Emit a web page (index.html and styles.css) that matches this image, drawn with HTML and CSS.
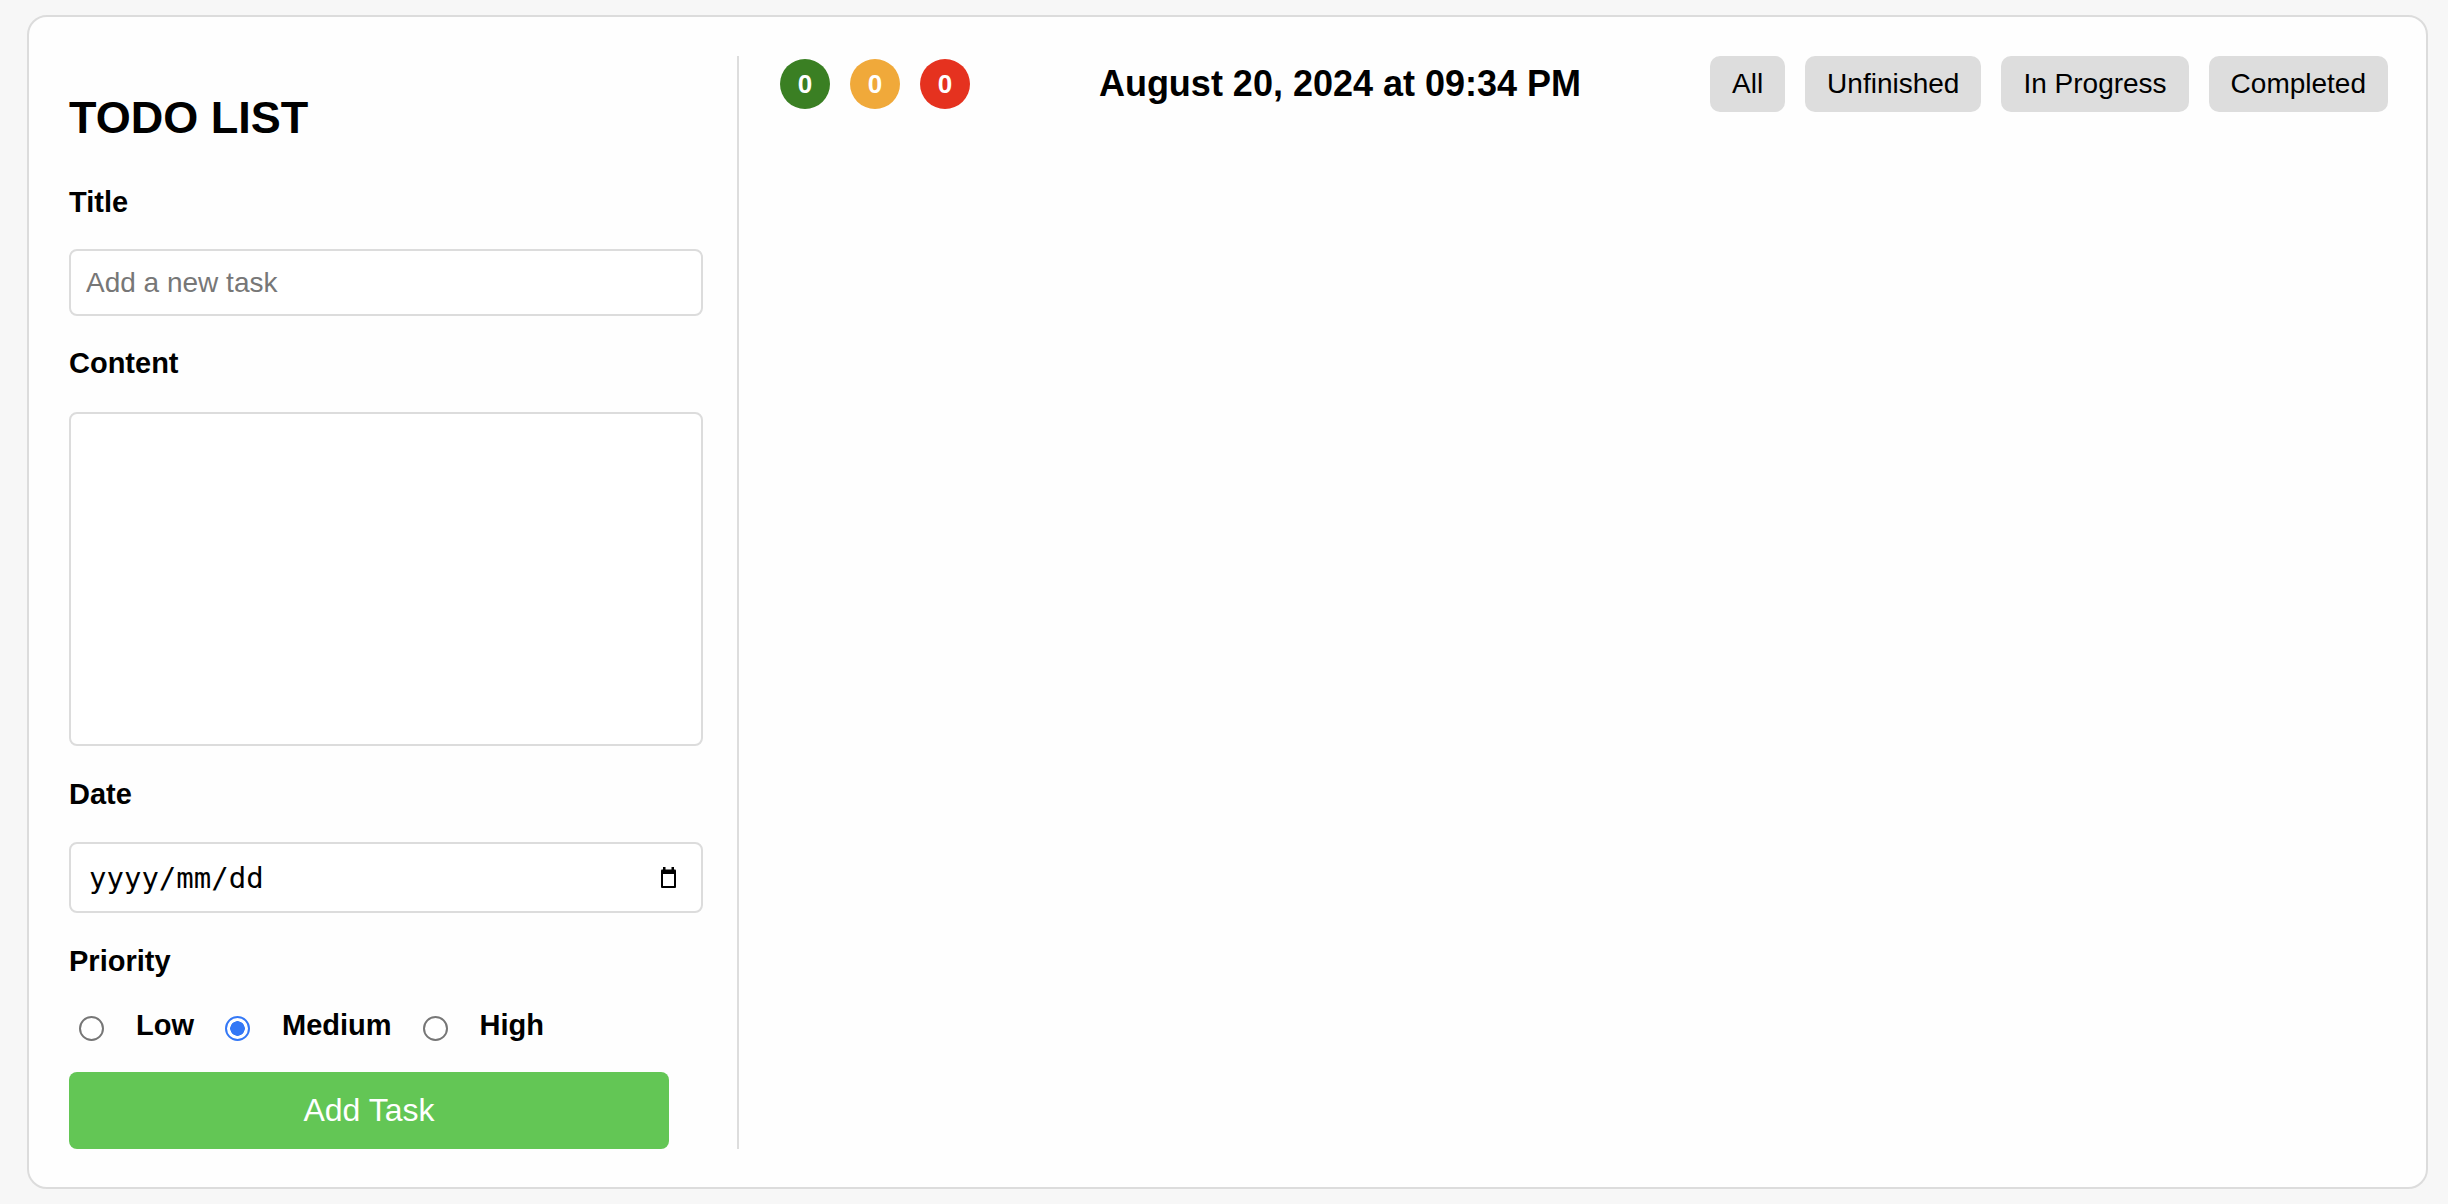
FILE: index.html
```html
<!DOCTYPE html>
<html lang="en">
<head>
<meta charset="utf-8">
<title>Todo List</title>
<link rel="stylesheet" href="styles.css">
</head>
<body>
<div class="card">
  <section class="form-panel">
    <h2 class="app-title">TODO LIST</h2>
    <label class="field-label" for="title">Title</label>
    <input class="text-input" id="title" type="text" placeholder="Add a new task">
    <label class="field-label label-content" for="content">Content</label>
    <textarea class="text-area" id="content"></textarea>
    <label class="field-label label-date">Date</label>
    <div class="date-input">
      <span class="date-text">yyyy/mm/dd</span>
      <svg class="cal-icon" width="15" height="21" viewBox="0 0 15 21" aria-hidden="true">
        <rect x="2" y="0" width="2.5" height="4" fill="#000"/>
        <rect x="10.5" y="0" width="2.5" height="4" fill="#000"/>
        <rect x="0" y="2.5" width="15" height="18.5" rx="1" fill="#000"/>
        <rect x="2" y="7" width="11" height="12" fill="#fff"/>
      </svg>
    </div>
    <label class="field-label label-priority">Priority</label>
    <div class="radio-row">
      <input class="radio" type="radio" name="priority" id="p-low">
      <label class="radio-label" for="p-low">Low</label>
      <input class="radio" type="radio" name="priority" id="p-med" checked>
      <label class="radio-label" for="p-med">Medium</label>
      <input class="radio" type="radio" name="priority" id="p-high">
      <label class="radio-label" for="p-high">High</label>
    </div>
    <button class="add-btn" type="button">Add Task</button>
  </section>
  <section class="list-panel">
    <div class="list-header">
      <div class="badges">
        <span class="badge badge-green">0</span>
        <span class="badge badge-orange">0</span>
        <span class="badge badge-red">0</span>
      </div>
      <div class="datetime">August 20, 2024 at 09:34 PM</div>
      <div class="filters">
        <button class="filter-btn" type="button">All</button>
        <button class="filter-btn" type="button">Unfinished</button>
        <button class="filter-btn" type="button">In Progress</button>
        <button class="filter-btn" type="button">Completed</button>
      </div>
    </div>
  </section>
</div>
</body>
</html>
```

FILE: styles.css
```css
* { box-sizing: border-box; }

html, body {
  margin: 0;
  padding: 0;
  background: #f7f7f7;
  font-family: "Liberation Sans", Arial, Helvetica, sans-serif;
  color: #000;
}

body {
  padding: 15px 20px 0 27px;
}

.card {
  display: flex;
  width: 2401px;
  height: 1174px;
  background: #fefefe;
  border: 2px solid #dcdcdc;
  border-radius: 20px;
  padding: 39px 38px 38px 40px;
}

.form-panel {
  display: flex;
  flex-direction: column;
  align-items: flex-start;
  width: 670px;
  flex: none;
  padding-right: 34px;
  border-right: 2px solid #dddddd;
}

.app-title {
  margin: 36px 0 0;
  font-size: 45px;
  line-height: 52px;
  font-weight: bold;
}

.field-label {
  display: block;
  margin-top: 41px;
  font-size: 29px;
  line-height: 34px;
  font-weight: bold;
}

.label-content { margin-top: 30px; }
.label-date { margin-top: 31px; }
.label-priority { margin-top: 31px; }

.text-input {
  display: block;
  width: 634px;
  height: 67px;
  margin-top: 30px;
  border: 2px solid #dcdcdc;
  border-radius: 8px;
  padding: 0 15px;
  font-family: "Liberation Sans", Arial, sans-serif;
  font-size: 28px;
  color: #000;
  background: #fff;
  outline: none;
}

.text-input::placeholder { color: #777777; }

.text-area {
  display: block;
  width: 634px;
  height: 334px;
  margin-top: 32px;
  border: 2px solid #dcdcdc;
  border-radius: 8px;
  padding: 14px;
  resize: none;
  background: #fff;
  font-family: "Liberation Sans", Arial, sans-serif;
  font-size: 28px;
  outline: none;
}

.date-input {
  display: flex;
  align-items: center;
  justify-content: space-between;
  width: 634px;
  height: 71px;
  margin-top: 31px;
  border: 2px solid #dcdcdc;
  border-radius: 8px;
  padding: 0 25px 0 18px;
  background: #fff;
}

.date-text {
  font-family: "DejaVu Sans Mono", "Liberation Mono", monospace;
  font-size: 29px;
  line-height: 34px;
  color: #000;
}

.cal-icon { display: block; }

.radio-row {
  display: flex;
  align-items: center;
  height: 34px;
  margin-top: 30px;
}

.radio {
  appearance: none;
  -webkit-appearance: none;
  width: 25px;
  height: 25px;
  margin: 6px 32px 0 10px;
  border: 2px solid #767676;
  border-radius: 50%;
  background: #fff;
  flex: none;
}

.radio:checked {
  border-color: #3478f6;
  background: radial-gradient(circle, #3478f6 0 7px, #fff 7.5px);
}

.radio-label {
  margin-right: 21px;
  font-size: 29px;
  line-height: 34px;
  font-weight: bold;
}

.add-btn {
  width: 600px;
  height: 77px;
  margin-top: 30px;
  border: none;
  border-radius: 8px;
  background: #63c655;
  color: #fff;
  font-family: "Liberation Sans", Arial, sans-serif;
  font-size: 32px;
  padding: 0;
}

.list-panel {
  flex: 1;
  padding-left: 41px;
}

.list-header {
  display: flex;
  align-items: center;
  justify-content: space-between;
  height: 56px;
}

.badges {
  display: flex;
  gap: 20px;
}

.badge {
  display: flex;
  align-items: center;
  justify-content: center;
  width: 50px;
  height: 50px;
  border-radius: 50%;
  color: #fff;
  font-weight: bold;
  font-size: 26px;
}

.badge-green { background: #3a7f23; }
.badge-orange { background: #f0a93a; }
.badge-red { background: #e5321f; }

.datetime {
  font-size: 36px;
  font-weight: bold;
  line-height: 42px;
}

.filters {
  display: flex;
  gap: 20px;
}

.filter-btn {
  height: 56px;
  padding: 0 22px;
  border: none;
  border-radius: 10px;
  background: #dddddd;
  color: #000;
  font-family: "Liberation Sans", Arial, sans-serif;
  font-size: 28px;
}
```
